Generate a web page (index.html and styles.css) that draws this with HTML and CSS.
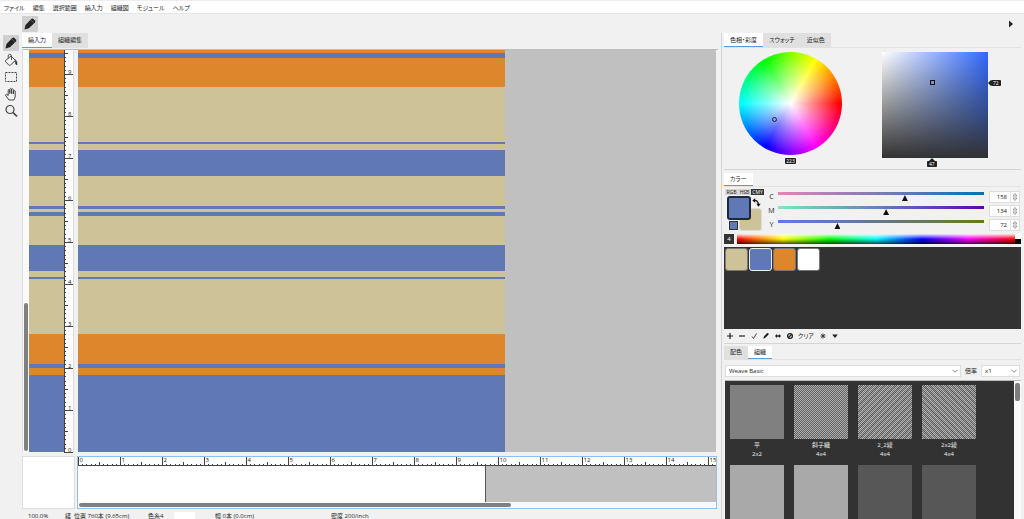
FILE: index.html
```html
<!DOCTYPE html>
<html lang="ja">
<head>
<meta charset="utf-8">
<title>縞入力</title>
<link rel="stylesheet" href="styles.css">
</head>
<body>
<nav class="menubar">
  <button class="menu-item">ファイル</button>
  <button class="menu-item">編集</button>
  <button class="menu-item">選択範囲</button>
  <button class="menu-item">縞入力</button>
  <button class="menu-item">組織図</button>
  <button class="menu-item">モジュール</button>
  <button class="menu-item">ヘルプ</button>
</nav>
<div class="toolbar">
  <button class="tool active" aria-label="鉛筆">
    <svg viewBox="0 0 16 16"><path d="M2.500 13.500l1-4.600 5.800-6q1-.9 2 0l1.600 1.600q.9 1 0 2l-6 5.800z" fill="#222"/><path d="M8.800 4l3 3" stroke="#888" stroke-width=".6"/></svg>
  </button>
  <button class="expand" aria-label="展開"><svg viewBox="0 0 6 8"><path d="M1 0.500l4 3.500-4 3.500z" fill="#222"/></svg></button>
</div>
<main class="workspace">
  <aside class="rail">
    <button class="tool active" aria-label="鉛筆">
      <svg viewBox="0 0 16 16"><path d="M2.500 13.500l1-4.600 5.800-6q1-.9 2 0l1.600 1.600q.9 1 0 2l-6 5.800z" fill="#222"/><path d="M8.800 4l3 3" stroke="#888" stroke-width=".6"/></svg>
    </button>
    <button class="tool" aria-label="塗りつぶし">
      <svg viewBox="0 0 16 16" fill="none" stroke="#444"><path d="M2.500 8.500L8 4l4.500 4.500-5 4.500q-1 .6-2-.3L2.800 10q-.8-.8-.3-1.500z"/><path d="M8.500 8V4q-.3-2-2-1.700Q5 2.600 5.200 4v2.500" stroke-width=".9"/><path d="M12 7.500q2.500 1.500 2 5.500-2 0-1.600-4z" fill="#222" stroke-width=".6"/></svg>
    </button>
    <button class="tool" aria-label="矩形選択">
      <svg viewBox="0 0 16 16" fill="none" stroke="#444"><rect x="2.500" y="3.500" width="11" height="9" stroke-dasharray="2 1"/></svg>
    </button>
    <button class="tool" aria-label="手のひら">
      <svg viewBox="0 0 16 16" fill="none" stroke="#444" stroke-linejoin="round"><path d="M6 14L2.800 9.800Q2.200 8.400 3.500 8.300L5.200 9.600V4.200q.8-1.200 1.600 0V7.500 3q.9-1.300 1.700 0v4.500V3.400q.9-1.200 1.800 0V8 5q1-1 1.900 0v5q0 2.300-1.500 4z"/></svg>
    </button>
    <button class="tool" aria-label="ズーム">
      <svg viewBox="0 0 16 16" fill="none" stroke="#444"><circle cx="7" cy="6.500" r="4" stroke-width="1.200"/><path d="M10 9.500l4 4" stroke-width="1.700"/></svg>
    </button>
  </aside>

  <section class="editor">
    <div class="tabs" role="tablist">
      <button class="tab selected" role="tab">縞入力</button>
      <button class="tab" role="tab">組織編集</button>
    </div>
    <div class="weave-view">
      <div class="v-scroll"><div class="v-thumb"></div></div>
      <div class="stripes yarn-strip"></div>
      <div class="v-ruler" id="v-ruler"></div>
      <div class="canvas"><div class="stripes fabric"></div></div>
    </div>
    <div class="warp-row">
      <div class="corner"></div>
      <div class="warp">
        <div class="h-ruler" id="h-ruler"></div>
        <div class="warp-body"><div class="warp-used"></div></div>
        <div class="h-scroll"><div class="h-thumb"></div></div>
      </div>
    </div>
    <footer class="status">
      <span class="zoom">100.0%</span>
      <span class="axis">経</span>
      <span class="place">位置 760本 (9.65cm)</span>
      <span class="yarn">色糸4</span>
      <span class="yarn-color"></span>
      <span class="span">幅 0本 (0.0cm)</span>
      <span>密度 200/inch</span>
    </footer>
  </section>

  <aside class="panel">
    <div class="tabs" role="tablist">
      <button class="tab selected" role="tab">色相・彩度</button>
      <button class="tab" role="tab">スウォッチ</button>
      <button class="tab" role="tab">近似色</button>
    </div>
    <div class="pickers">
      <div class="wheel-box">
        <div class="wheel"><span class="wheel-mark"></span></div>
        <span class="badge">223</span>
      </div>
      <div class="square-box">
        <div class="square"><span class="square-mark"></span></div>
        <span class="badge badge-right">72</span>
        <span class="badge badge-bottom">47</span>
      </div>
    </div>

    <div class="tabs section" role="tablist">
      <button class="tab selected" role="tab">カラー</button>
    </div>
    <div class="color-editor">
      <div class="color-side">
        <div class="modes"><button class="mode">RGB</button><button class="mode">HSB</button><button class="mode on">CMY</button></div>
        <div class="pair">
          <span class="back"></span><span class="front"></span><span class="mini"></span>
          <button class="swap" aria-label="入れ替え"><svg viewBox="0 0 9 9" fill="none" stroke="#111" stroke-width="1.200"><path d="M2 2.500q4-.5 4.500 4"/><path d="M3.200.3v4.400L.3 2.500zM4.300 5.800h4.400L6.500 8.800z" fill="#111" stroke="none"/></svg></button>
        </div>
      </div>
      <div class="sliders">
        <div class="slider-row">
          <label for="c">C</label><input class="range cyan" id="c" type="range" min="0" max="255" value="158">
          <span class="stepper"><input class="num" aria-label="C 値" value="158"><svg viewBox="0 0 8 10" fill="none" stroke="#777" stroke-width=".7"><path d="M2 4l2-2.500L6 4zM2 6l2 2.500L6 6z"/></svg></span>
        </div>
        <div class="slider-row">
          <label for="m">M</label><input class="range magenta" id="m" type="range" min="0" max="255" value="134">
          <span class="stepper"><input class="num" aria-label="M 値" value="134"><svg viewBox="0 0 8 10" fill="none" stroke="#777" stroke-width=".7"><path d="M2 4l2-2.500L6 4zM2 6l2 2.500L6 6z"/></svg></span>
        </div>
        <div class="slider-row">
          <label for="y">Y</label><input class="range yellow" id="y" type="range" min="0" max="255" value="72">
          <span class="stepper"><input class="num" aria-label="Y 値" value="72"><svg viewBox="0 0 8 10" fill="none" stroke="#777" stroke-width=".7"><path d="M2 4l2-2.500L6 4zM2 6l2 2.500L6 6z"/></svg></span>
        </div>
      </div>
    </div>
    <div class="spectrum-row"><span class="index">4</span><span class="spectrum"></span><span class="bw"></span></div>
    <div class="palette">
      <button class="chip tan" aria-label="色1"></button>
      <button class="chip blue picked" aria-label="色2"></button>
      <button class="chip orange" aria-label="色3"></button>
      <button class="chip white" aria-label="色4"></button>
    </div>
    <div class="palette-tools">
      <button class="mini-tool" aria-label="追加"><svg viewBox="0 0 8 8"><path d="M4 1v6M1 4h6" stroke="#222" stroke-width="1.200"/></svg></button>
      <button class="mini-tool" aria-label="削除"><svg viewBox="0 0 8 8"><path d="M1 4h6" stroke="#222" stroke-width="1.200"/></svg></button>
      <button class="mini-tool" aria-label="決定"><svg viewBox="0 0 8 8"><path d="M2 4.500l1.500 2L6.500 1.500" fill="none" stroke="#333" stroke-width=".9"/></svg></button>
      <button class="mini-tool" aria-label="編集"><svg viewBox="0 0 8 8"><path d="M1.300 6.800L2 4.300l3-3q.8-.6 1.400 0t0 1.500l-3 3z" fill="#222"/></svg></button>
      <button class="mini-tool" aria-label="交換"><svg viewBox="0 0 8 8"><path d="M1 4l2-2v1.200h2V2l2 2-2 2V4.800H3V6z" fill="#222"/></svg></button>
      <button class="mini-tool" aria-label="禁止"><svg viewBox="0 0 8 8" fill="none" stroke="#222" stroke-width="1.300"><circle cx="4" cy="4" r="2.400"/><path d="M2.500 5.500l3-3"/></svg></button>
      <button class="clear">クリア</button>
      <button class="mini-tool" aria-label="並べ替え"><svg viewBox="0 0 8 8"><path d="M4 1.500v5M1.500 4h5M2.200 2.200l3.600 3.600M5.800 2.200L2.200 5.800" stroke="#333" stroke-width=".9"/></svg></button>
      <button class="mini-tool" aria-label="メニュー"><svg viewBox="0 0 8 8"><path d="M1.200 2.500h5.600L4 6z" fill="#222"/></svg></button>
    </div>

    <div class="tabs section-weave" role="tablist">
      <button class="tab" role="tab">配色</button>
      <button class="tab selected" role="tab">組織</button>
    </div>
    <div class="weave-select">
      <span class="select-box grow">
        <select aria-label="組織セット"><option>Weave Basic</option></select>
        <svg viewBox="0 0 8 8" fill="none" stroke="#888"><path d="M1.500 2.800L4 5.300l2.500-2.500"/></svg>
      </span>
      <label for="scale">倍率</label>
      <span class="select-box">
        <select id="scale"><option>x1</option></select>
        <svg viewBox="0 0 8 8" fill="none" stroke="#888"><path d="M1.500 2.800L4 5.300l2.500-2.500"/></svg>
      </span>
    </div>
    <div class="library">
      <div class="tiles">
        <figure class="tile"><div class="swatch plain"></div><figcaption>平<br>2x2</figcaption></figure>
        <figure class="tile"><div class="swatch basket"></div><figcaption>斜子織<br>4x4</figcaption></figure>
        <figure class="tile"><div class="swatch twill-up"></div><figcaption>2_2綾<br>4x4</figcaption></figure>
        <figure class="tile"><div class="swatch twill-down"></div><figcaption>2x2綾<br>4x4</figcaption></figure>
        <figure class="tile"><div class="swatch light"></div></figure>
        <figure class="tile"><div class="swatch light"></div></figure>
        <figure class="tile"><div class="swatch dark"></div></figure>
        <figure class="tile"><div class="swatch dark"></div></figure>
      </div>
      <div class="lib-scroll"><div class="lib-thumb"></div></div>
    </div>
  </aside>
</main>
<script src="script.js"></script>
</body>
</html>
```
FILE: styles.css
```css
* { box-sizing: border-box; }

:root {
  --blue: #6178b7;
  --orange: #dd862b;
  --tan: #cdc298;
  --dark: #323232;
  --line: #d4d4d4;
}

body {
  margin: 0;
  height: 100vh;
  display: flex;
  flex-direction: column;
  overflow: hidden;
  background: #f1f1f1;
  color: #222;
  font: 6px/8px "Open Sans", "Noto Sans CJK JP", sans-serif;
  font-feature-settings: "palt";
}

button, input, select {
  font: inherit;
  font-feature-settings: inherit;
  color: inherit;
  margin: 0;
  padding: 0;
  border: 0;
  background: none;
}

svg { display: block; }

.menubar {
  height: 14px;
  flex: none;
  display: flex;
  align-items: center;
  gap: 8px;
  padding: 2px 4px 0;
  background: #fff;
  border-top: 1px solid #ededed;
  border-bottom: 1px solid #e6e6e6;
}

.toolbar {
  height: 19px;
  flex: none;
  display: flex;
  align-items: center;
  justify-content: space-between;
  padding: 1px 10px 0 22px;
}

.tool { width: 16px; height: 16px; }
.tool svg { width: 16px; height: 16px; }
.tool.active { background: #cfcfcf; border-radius: 1px; }
.expand svg { width: 6px; height: 8px; }

.workspace {
  flex: 1;
  min-height: 0;
  display: grid;
  grid-template-columns: 22px minmax(0, 1fr) 303px;
}

.rail {
  display: flex;
  flex-direction: column;
  align-items: center;
  gap: 1px;
  padding-top: 2px;
}

.tabs { display: flex; flex: none; height: 15px; border-bottom: 1px solid #e2e2e2; }
.tab { padding: 0 6px; background: #e0e0e0; border-bottom: 1px solid #e0e0e0; }
.tab.selected { background: #fff; border-bottom-color: #5a9bdc; }

.editor { display: flex; flex-direction: column; min-width: 0; padding-right: 3px; }
.editor > .tabs { border-bottom: 0; }

.weave-view {
  flex: 1;
  min-height: 0;
  display: flex;
  margin-top: 1px;
  border-top: 1px solid #bdbdbd;
  border-left: 1px solid #ddd;
}

.v-scroll {
  width: 6px;
  display: flex;
  flex-direction: column;
  justify-content: flex-end;
  align-items: center;
  padding-bottom: 2px;
  background: #fafafa;
}
.v-thumb { width: 4px; height: 37%; border-radius: 2px; background: #808080; }

.stripes {
  background: linear-gradient(
    var(--orange) 0 3px, var(--blue) 3px 8px, var(--orange) 8px 37px,
    var(--tan) 37px 92px, var(--blue) 92px 94px, var(--tan) 94px 100px,
    var(--blue) 100px 126px, var(--tan) 126px 156px, var(--blue) 156px 159px,
    var(--tan) 159px 162px, var(--blue) 162px 166px, var(--tan) 166px 195px,
    var(--blue) 195px 221px, var(--tan) 221px 227px, var(--blue) 227px 229px,
    var(--tan) 229px 284px, var(--orange) 284px 314px, var(--blue) 314px 318px,
    var(--orange) 318px 325px, var(--blue) 325px);
}
.yarn-strip { width: 35px; margin-bottom: 1px; }
.v-ruler { width: 10px; background: #fff; overflow: hidden; border-right: 1px solid #ddd; }
.canvas { flex: 1; margin: 0 2px 1px 4px; background: #c0c0c0; display: flex; }
.fabric { width: 67%; }

.warp-row { flex: none; display: flex; gap: 2px; height: 56px; padding: 3px 1px 0 0; }
.corner { width: 53px; background: #fff; border: 1px solid #ddd; }
.warp { flex: 1; min-width: 0; display: flex; flex-direction: column; background: #fff; border: 1px solid #8fc0ee; }
.h-ruler { height: 9px; overflow: hidden; }
.warp-body { flex: 1; background: #c0c0c0; }
.warp-used { width: 64%; height: 100%; background: #fff; border-right: 1px solid #555; }
.h-scroll { height: 6px; padding: 1px; background: #f8f8f8; }
.h-thumb { width: 68%; height: 4px; border-radius: 2px; background: #808080; }

.ruler-svg line { stroke: #444; stroke-width: 1; shape-rendering: crispEdges; }
.ruler-svg text { font-size: 6px; fill: #222; }

.status {
  flex: none;
  height: 10px;
  display: flex;
  padding: 3px 0 0 6px;
  white-space: nowrap;
}
.zoom { width: 37px; }
.axis { width: 9px; }
.place { width: 74px; }
.yarn { width: 26px; }
.yarn-color { width: 21px; margin-right: 20px; background: #fff; }
.span { width: 116px; }

.panel {
  display: flex;
  flex-direction: column;
  min-height: 0;
  padding: 0 3px 0 2px;
  border-left: 1px solid var(--line);
}

.pickers { display: flex; gap: 40px; height: 121px; flex: none; padding: 4px 0 0 15px; }
.wheel-box { display: flex; flex-direction: column; align-items: center; gap: 3px; }
.wheel {
  position: relative;
  width: 103px;
  height: 103px;
  border-radius: 50%;
  background:
    radial-gradient(circle closest-side, #fff 0, rgba(255, 255, 255, .5) 45%, rgba(255, 255, 255, 0) 95%),
    conic-gradient(from 90deg, #f00, #f0f, #00f, #0ff, #0f0, #ff0, #f00);
}
.wheel-mark { position: absolute; left: 32%; top: 63%; width: 5px; height: 5px; border: 1px solid #222; border-radius: 50%; }
.badge { padding: 0 1px; border-radius: 1px; background: #222; color: #fff; font-size: 5px; line-height: 6px; }
.square-box { display: grid; grid-template-columns: 106px auto; align-content: start; align-items: start; row-gap: 3px; }
.square {
  position: relative;
  height: 106px;
  background: linear-gradient(rgba(50, 50, 50, 0), #323232), linear-gradient(90deg, #fff, #2f68ff);
}
.square-mark { position: absolute; left: 45%; top: 26%; width: 5px; height: 5px; border: 1px solid #111; }
.badge-right { position: relative; padding: 0 2px; margin: 28px 0 0 3px; }
.badge-right::before { content: ""; position: absolute; left: -3px; top: 0; border: 3px solid transparent; border-left: 0; border-right-color: #222; }
.badge-bottom { position: relative; padding: 0 2px; justify-self: start; margin-left: 45px; }
.badge-bottom::before { content: ""; position: absolute; left: 2px; top: -3px; border: 3px solid transparent; border-top: 0; border-bottom-color: #222; }

.section { height: 18px; padding-top: 3px; border-top: 1px solid var(--line); }

.color-editor { display: flex; flex: none; height: 45px; gap: 7px; }
.color-side { width: 40px; padding: 2px 0 0 1px; }
.modes { display: flex; }
.mode { width: 13px; height: 6px; font-size: 5px; line-height: 6px; background: #d6d6d6; }
.mode.on { background: #333; color: #fff; }
.pair { position: relative; height: 36px; }
.front, .back, .mini { position: absolute; border-radius: 3px; }
.front { left: 2px; top: 1px; width: 24px; height: 24px; background: var(--blue); border: 2px solid #1c2740; }
.back { left: 14px; top: 13px; width: 23px; height: 23px; background: var(--tan); border: 1px solid #ddd; }
.mini { left: 4px; top: 26px; width: 9px; height: 9px; border-radius: 0; background: var(--blue); border: 1px solid #333; }
.swap { position: absolute; left: 27px; top: 3px; width: 9px; height: 9px; }

.sliders { flex: 1; display: flex; flex-direction: column; gap: 2px; padding: 4px 1px 0 0; }
.slider-row { display: flex; align-items: center; height: 12px; }
.slider-row label { width: 7px; font-size: 7px; text-align: center; margin-left: -3px; margin-right: 3px; }
.range {
  appearance: none;
  flex: 1;
  min-width: 0;
  height: 10px;
  margin-right: 5px;
  background: var(--track) top / 100% 3px no-repeat;
}
.range::-webkit-slider-thumb {
  appearance: none;
  width: 6px;
  height: 6px;
  margin-top: 2px;
  background: #111;
  clip-path: polygon(50% 0, 100% 100%, 0 100%);
}
.cyan { --track: linear-gradient(90deg, #e683b4, #6178b7 62%, #0075ac); }
.magenta { --track: linear-gradient(90deg, #7ee8bb, #6178b7 53%, #6200ae); }
.yellow { --track: linear-gradient(90deg, #6178f0, #6178b7 28%, #667a14); }
.stepper { display: flex; align-items: center; width: 31px; height: 12px; background: #fff; border: 1px solid #ddd; }
.num { width: 21px; height: 10px; padding-right: 3px; text-align: right; border-right: 1px solid #e2e2e2; }
.stepper svg { width: 8px; height: 10px; }

.spectrum-row { display: flex; flex: none; height: 15px; padding: 2px 0 3px; }
.index { width: 10px; margin: 0 3px 0 0; background: #333; color: #fff; line-height: 10px; text-align: center; }
.spectrum {
  flex: 1;
  background:
    linear-gradient(rgba(255, 255, 255, .9), rgba(255, 255, 255, 0) 50%, rgba(0, 0, 0, 0) 50%, rgba(0, 0, 0, .7)),
    linear-gradient(90deg, #f00, #ff0, #0f0, #0ff, #00f, #f0f, #f00);
}
.bw { width: 6px; background: linear-gradient(#fff 50%, #000 50%); }

.palette { display: flex; flex: none; align-items: flex-start; gap: 1px; height: 82px; padding: 1px; background: var(--dark); }
.chip { width: 23px; height: 23px; border: 1px solid #777; border-radius: 3px; }
.chip.tan { background: var(--tan); }
.chip.blue { background: var(--blue); }
.chip.orange { background: var(--orange); }
.chip.white { background: #fff; }
.chip.picked { border-color: #eee; }

.palette-tools { display: flex; flex: none; align-items: center; height: 14px; gap: 4px; padding-left: 2px; }
.mini-tool, .mini-tool svg { width: 8px; height: 8px; }
.clear { padding-right: 1px; }

.section-weave { height: 17px; padding-top: 2px; border-top: 1px solid var(--line); }

.weave-select { display: flex; flex: none; align-items: center; gap: 4px; padding: 5px 1px 3px 1px; }
.select-box { display: grid; align-items: center; width: 39px; height: 12px; background: #fff; border: 1px solid #ddd; }
.select-box.grow { flex: 1; }
.select-box select { grid-area: 1 / 1; appearance: none; width: 100%; padding-left: 3px; }
.select-box svg { grid-area: 1 / 1; justify-self: end; width: 8px; height: 8px; margin-right: 1px; pointer-events: none; }

.library { flex: 1; min-height: 0; display: flex; overflow: hidden; margin-left: 1px; border-top: 1px solid #bbb; }
.tiles {
  flex: 1;
  display: grid;
  grid-template-columns: repeat(auto-fill, 54px);
  grid-auto-rows: 70px;
  align-content: start;
  gap: 10px;
  padding: 4px 5px;
  background: var(--dark);
}
.tile { margin: 0; color: #eee; text-align: center; line-height: 9px; }
.tile figcaption { padding-top: 2px; }
.swatch { height: 54px; }
.plain { background: #808080; }
.light { background: #a9a9a9; }
.dark { background: #575757; }
.basket, .twill-up, .twill-down {
  --check: conic-gradient(#b2b2b2 25%, #5e5e5e 0 50%, #b2b2b2 0 75%, #5e5e5e 0) 0 0 / 2px 2px;
}
.basket { background: var(--check); }
.twill-up {
  background: repeating-linear-gradient(135deg, rgba(255, 255, 255, .1) 0 2px, rgba(0, 0, 0, .1) 2px 4px), var(--check);
}
.twill-down {
  background: repeating-linear-gradient(45deg, rgba(255, 255, 255, .1) 0 2px, rgba(0, 0, 0, .1) 2px 4px), var(--check);
}
.lib-scroll { width: 7px; padding: 2px 1px; background: #fafafa; }
.lib-thumb { height: 18px; border-radius: 2px; background: #7d7d7d; }
```
FILE: script.js
```js
const NS = "http://www.w3.org/2000/svg";
const UNIT = 42;

function add(parent, name, attrs, text) {
  const el = document.createElementNS(NS, name);
  for (const key in attrs) el.setAttribute(key, attrs[key]);
  if (text !== undefined) el.textContent = text;
  parent.appendChild(el);
  return el;
}

function drawRuler(host, vertical) {
  const w = host.clientWidth;
  const h = host.clientHeight;
  const svg = add(host, "svg", { class: "ruler-svg", width: w, height: h });
  const length = vertical ? h : w;
  if (vertical) add(svg, "line", { x1: 0.5, x2: 0.5, y1: 0, y2: h });
  else add(svg, "line", { x1: 0, x2: w, y1: h - 0.5, y2: h - 0.5 });
  for (let i = 0; i * UNIT / 10 < length; i++) {
    const at = Math.round(i * UNIT / 10) + 0.5;
    const major = i % 10 === 0;
    const size = major ? 9 : i % 5 === 0 ? 4 : 2;
    if (vertical) {
      add(svg, "line", { x1: 0, x2: size, y1: h - at, y2: h - at });
      if (major) add(svg, "text", { x: 4, y: h - at - 1 }, i / 10);
    } else {
      add(svg, "line", { x1: at, x2: at, y1: h - size, y2: h });
      if (major) add(svg, "text", { x: at + 1, y: 5 }, i / 10);
    }
  }
}

drawRuler(document.getElementById("v-ruler"), true);
drawRuler(document.getElementById("h-ruler"), false);
```
